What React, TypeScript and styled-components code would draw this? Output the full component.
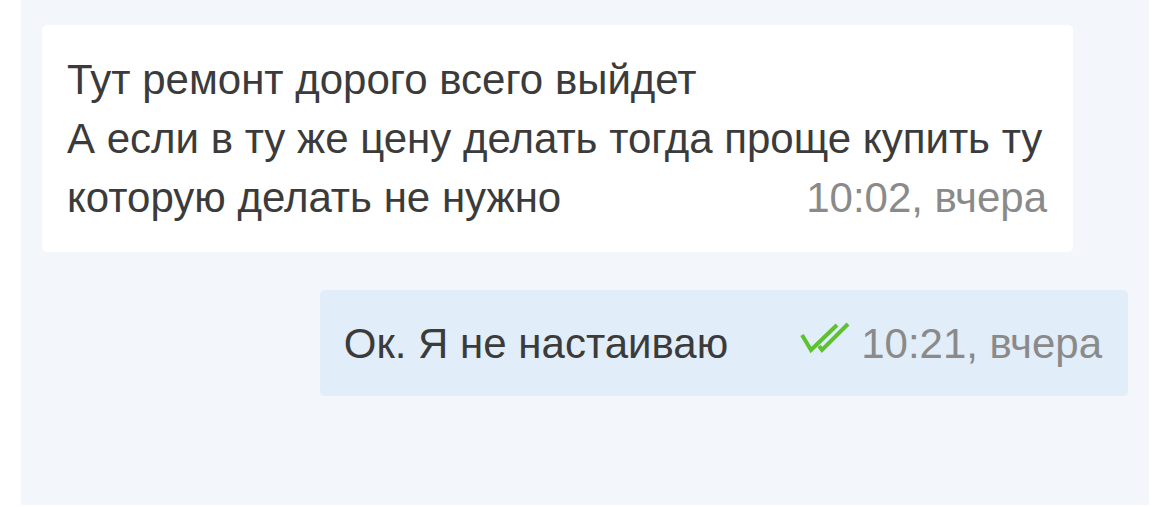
import React from "react";
import styled, { createGlobalStyle } from "styled-components";

const GlobalStyle = createGlobalStyle`
	html, body {
		margin: 0;
		padding: 0;
		background: #ffffff;
	}
	body {
		font-family: "Liberation Sans", Arial, sans-serif;
	}
`;

interface Message {
	id: number;
	lines: string[];
	time: string;
	own?: boolean;
	read?: boolean;
}

const messages: Message[] = [
	{
		id: 1,
		lines: [
			"Тут ремонт дорого всего выйдет",
			"А если в ту же цену делать тогда проще купить ту",
			"которую делать не нужно",
		],
		time: "10:02, вчера",
	},
	{
		id: 2,
		lines: ["Ок. Я не настаиваю"],
		time: "10:21, вчера",
		own: true,
		read: true,
	},
];

const DoubleCheck = () => (
	<CheckIcon width="50" height="32" viewBox="0 0 50 32" aria-label="Прочитано">
		<polyline points="2,13 11,28 37,3" />
		<polyline points="19,24 22,28 48,2" />
	</CheckIcon>
);

const App = () => {
	return (
		<>
			<GlobalStyle />
			<Chat>
				{messages.map((m) => {
					const last = m.lines[m.lines.length - 1];
					const rest = m.lines.slice(0, -1);
					return (
						<Bubble key={m.id} own={m.own}>
							{rest.map((line) => (
								<Line key={line}>{line}</Line>
							))}
							<LastRow>
								<span>{last}</span>
								<Meta>
									{m.read && <DoubleCheck />}
									<Time>{m.time}</Time>
								</Meta>
							</LastRow>
						</Bubble>
					);
				})}
			</Chat>
		</>
	);
};

export default App;

const Chat = styled.div`
	display: flex;
	flex-direction: column;
	gap: 38px;
	box-sizing: border-box;
	width: 1128px;
	height: 505px;
	margin-left: 21px;
	padding: 25px 21px 0;
	background: #f3f6fa;
`;

const Bubble = styled.div<{ own?: boolean }>`
	align-self: ${({ own }) => (own ? "flex-end" : "flex-start")};
	box-sizing: border-box;
	width: ${({ own }) => (own ? "auto" : "1031px")};
	padding: ${({ own }) => (own ? "24px 26px 23px 24px" : "25px 26px 25px 25px")};
	background: ${({ own }) => (own ? "#e1edf8" : "#ffffff")};
	border-radius: 5px;
	color: #3b3b3b;
	font-size: 42px;
	line-height: 59px;
	white-space: nowrap;
`;

const Line = styled.div``;

const LastRow = styled.div`
	display: flex;
	align-items: center;
	justify-content: space-between;
	gap: 72px;
`;

const Meta = styled.div`
	display: flex;
	align-items: center;
	gap: 11px;
`;

const Time = styled.span`
	color: #8a8a8a;
`;

const CheckIcon = styled.svg`
	margin-top: -12px;
	fill: none;
	stroke: #5cc22f;
	stroke-width: 4;
	stroke-linecap: butt;
	stroke-linejoin: miter;
`;
